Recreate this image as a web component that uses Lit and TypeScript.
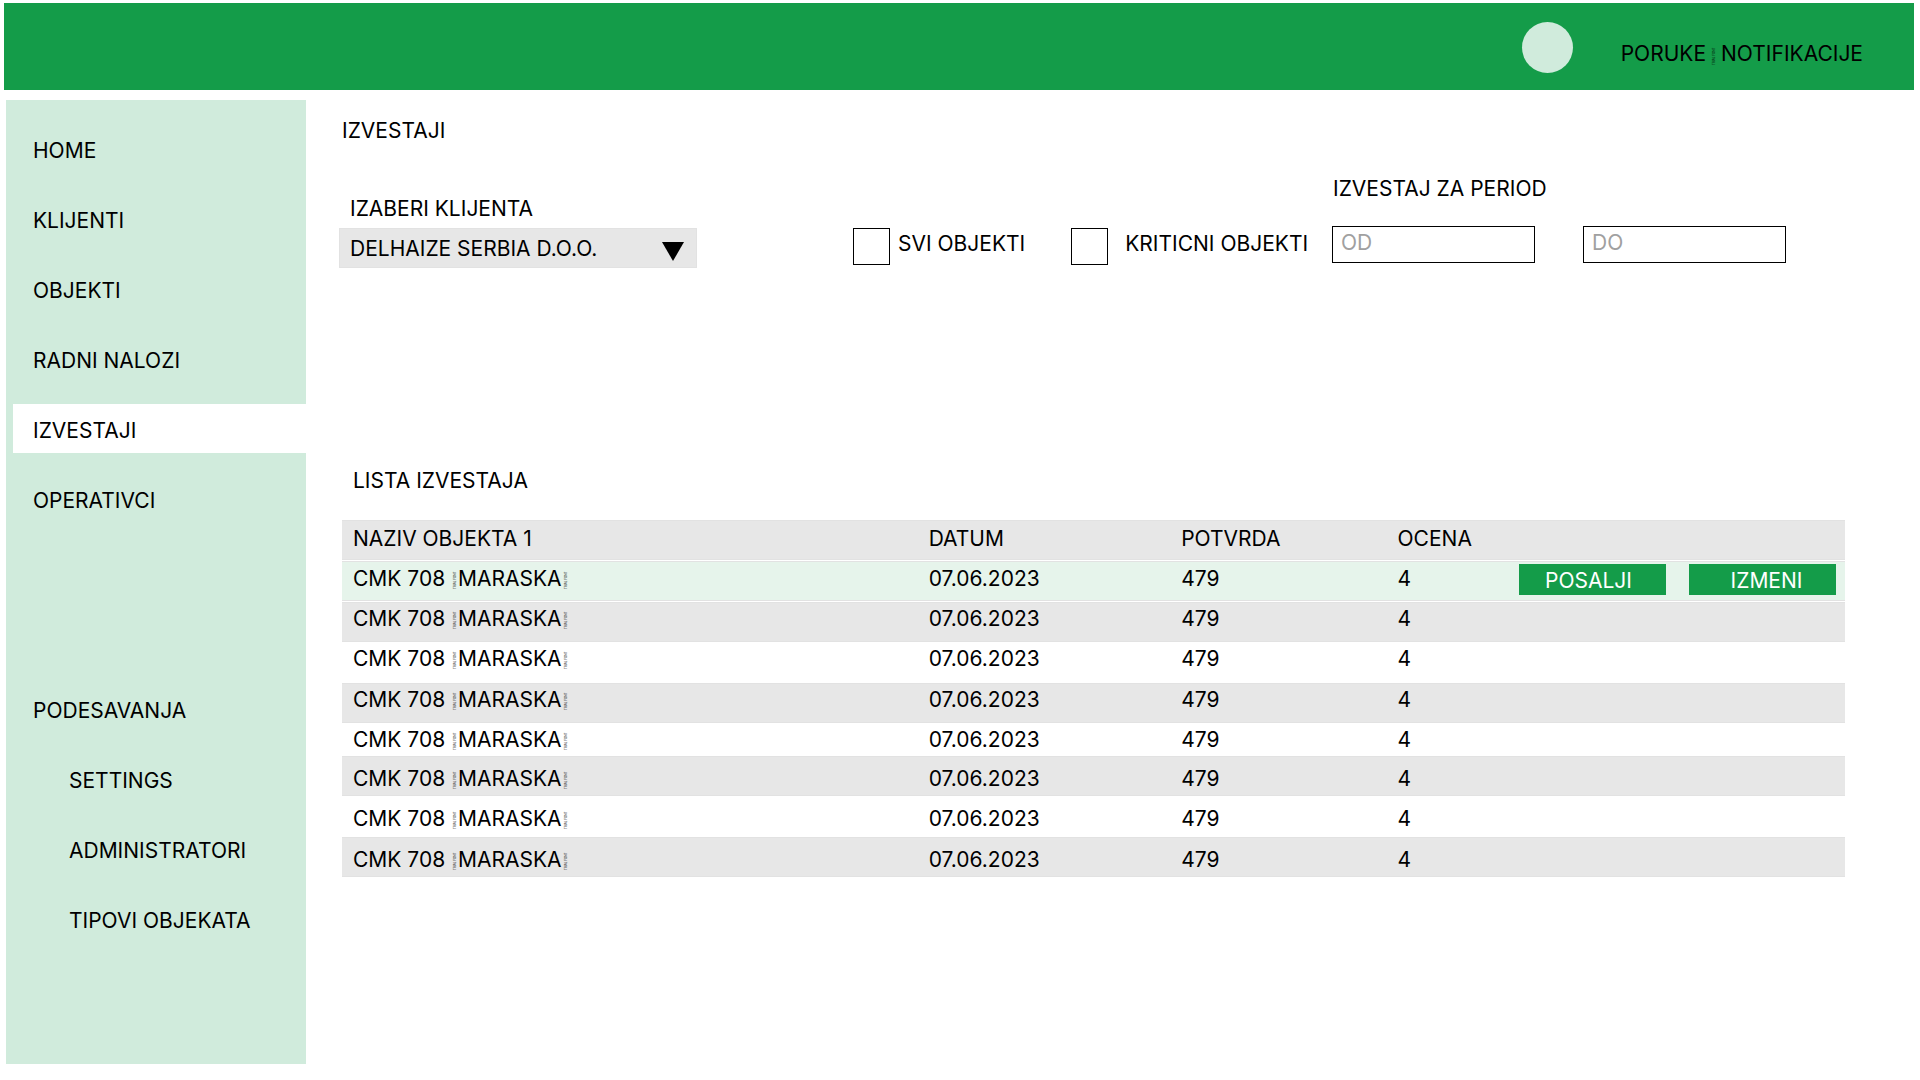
import { LitElement, html, css, nothing } from "lit";
import { customElement } from "lit/decorators.js";
import { classMap } from "lit/directives/class-map.js";

interface Report {
  code: string;
  name: string;
  date: string;
  receipt: string;
  grade: string;
  tone: string;
  actions?: boolean;
}

const report = (tone: string, actions = false): Report => ({
  code: "CMK 708",
  name: "MARASKA",
  date: "07.06.2023",
  receipt: "479",
  grade: "4",
  tone,
  actions,
});

const REPORTS: Report[] = [
  report("selected", true),
  report("shaded"),
  report("plain"),
  report("shaded"),
  report("short"),
  report("shaded low"),
  report("plain low"),
  report("shaded low"),
];

const MAIN_LINKS = ["HOME", "KLIJENTI", "OBJEKTI", "RADNI NALOZI", "IZVESTAJI", "OPERATIVCI"];
const SETTINGS_LINKS = ["SETTINGS", "ADMINISTRATORI", "TIPOVI OBJEKATA"];

@customElement("app-root")
export class AppRoot extends LitElement {
  static styles = css`
    :host {
      display: flex;
      flex-direction: column;
      box-sizing: border-box;
      min-height: 100vh;
      padding: 3px 6px 16px 4px;
      gap: 10px;
      background: #fff;
      color: #000;
      font: 21px/24px Inter, "Noto Sans", sans-serif;
    }
    * {
      box-sizing: border-box;
    }
    a {
      color: inherit;
      text-decoration: none;
    }
    h1,
    h2 {
      margin: 0;
      font-size: 21px;
      font-weight: 400;
    }
    button,
    input,
    select {
      font: inherit;
      color: inherit;
      border-radius: 0;
      margin: 0;
    }
    .bar {
      display: flex;
      align-items: flex-start;
      justify-content: flex-end;
      gap: 48px;
      height: 87px;
      padding: 19px 51px 0 0;
      background: #149c49;
    }
    .avatar {
      width: 51px;
      height: 51px;
      border-radius: 50%;
      background: #d0ebdc;
    }
    .links {
      display: flex;
      align-items: center;
      gap: 4px;
      padding-top: 20px;
    }
    .links .mark {
      margin-top: 4px;
    }
    .mark {
      display: inline-block;
      width: 3px;
      height: 18px;
      margin: 0 2px;
      vertical-align: -3px;
      overflow: visible;
    }
    .mark text {
      font-size: 3px;
    }
    .body {
      display: flex;
      flex: 1;
      padding-left: 2px;
    }
    .side {
      width: 300px;
      flex: none;
      padding: 24px 0 0 7px;
      background: #d0ebdc;
    }
    .menu {
      list-style: none;
      margin: 0;
      padding: 0;
      display: grid;
      gap: 21px;
    }
    .menu + .menu {
      margin-top: 161px;
    }
    .menu a {
      display: flex;
      align-items: center;
      height: 49px;
      padding: 4px 0 0 20px;
    }
    .menu .sub {
      padding-left: 56px;
    }
    .menu .active {
      background: #fff;
    }
    .main {
      flex: 1;
      min-width: 0;
      padding: 19px 69px 0 36px;
    }
    .filters {
      display: flex;
      align-items: flex-start;
      margin: 28px 0 0 -3px;
    }
    .client {
      display: grid;
      width: 358px;
      gap: 7px;
      margin-top: 26px;
    }
    .client label {
      padding-left: 11px;
      height: 24px;
    }
    .pick {
      display: grid;
      align-items: center;
    }
    .pick select {
      appearance: none;
      grid-area: 1 / 1;
      width: 100%;
      height: 40px;
      padding: 2px 40px 0 10px;
      border: 1px solid #e2e2e2;
      background: #e7e7e7;
    }
    .pick svg {
      grid-area: 1 / 1;
      justify-self: end;
      margin: 6px 13px 0 0;
      pointer-events: none;
    }
    .checks {
      display: flex;
      gap: 46px;
      margin: 57px 0 0 156px;
    }
    .check {
      display: flex;
      gap: 8px;
    }
    .check.wide {
      gap: 17px;
    }
    .check span {
      padding-top: 4px;
      white-space: nowrap;
    }
    .check input,
    .period input {
      appearance: none;
      height: 37px;
      border: 1px solid #000;
      background: #fff;
    }
    .check input {
      width: 37px;
    }
    .period {
      display: grid;
      gap: 25px;
      margin: 6px 59px 0 auto;
      padding: 0;
      border: 0;
    }
    .dates {
      display: flex;
      gap: 48px;
    }
    .period input {
      width: 203px;
      padding: 0 8px 4px;
    }
    .period input::placeholder {
      color: #a0a0a0;
      opacity: 1;
    }
    .caption {
      padding-left: 1px;
    }
    .list {
      margin: 201px 0 27px 11px;
    }
    table {
      width: 100%;
      table-layout: fixed;
      border-collapse: separate;
      border-spacing: 0;
    }
    .c-name {
      width: 38.3%;
    }
    .c-date {
      width: 16.8%;
    }
    .c-num {
      width: 14.4%;
    }
    .c-grade {
      width: 7%;
    }
    th,
    td {
      height: 40px;
      padding: 5px 0 0 11px;
      font-weight: 400;
      text-align: left;
      vertical-align: top;
      white-space: nowrap;
      background-clip: padding-box;
    }
    th {
      height: 41px;
      padding-top: 7px;
      border-bottom: 1px solid #fff;
    }
    th,
    .shaded td {
      background-color: #e7e7e7;
      box-shadow: inset 0 1px #e2e2e2, inset 0 -1px #e2e2e2;
    }
    .selected td {
      height: 41px;
      padding-top: 6px;
      border-bottom: 1px solid #fff;
      background-color: #e6f4eb;
      box-shadow: inset 0 1px #e2e2e2, inset 0 -1px #e2e2e2;
    }
    .plain td {
      height: 41px;
    }
    .short td {
      height: 33px;
    }
    .low td {
      padding-top: 11px;
    }
    .actions {
      display: flex;
      justify-content: flex-end;
      gap: 23px;
      margin-top: -3px;
      padding-right: 9px;
    }
    .actions button {
      flex: none;
      width: 147px;
      height: 31px;
      border: 0;
      background: #149c49;
      color: #fff;
    }
    .send {
      padding: 2px 8px 0 0;
    }
    .edit {
      padding: 2px 0 0 8px;
    }
  `;

  /** Tiny upright lettering that the trial typeface puts in place of a bar or bracket. */
  private mark() {
    return html`<svg class="mark" viewBox="0 0 3 18" aria-hidden="true">
      <text x="-18" y="3" transform="rotate(-90)" fill="currentColor">TRIAL FONT</text>
    </svg>`;
  }

  private link(label: string, sub = false) {
    const active = label === "IZVESTAJI";
    return html`<li>
      <a href="#" class=${classMap({ active, sub })} aria-current=${active ? "page" : nothing}>${label}</a>
    </li>`;
  }

  private row(r: Report) {
    return html`<tr class=${r.tone}>
      <td>${r.code} ${this.mark()}${r.name}${this.mark()}</td>
      <td>${r.date}</td>
      <td>${r.receipt}</td>
      <td>${r.grade}</td>
      <td>
        ${r.actions
          ? html`<div class="actions">
              <button class="send" type="button">POSALJI</button>
              <button class="edit" type="button">IZMENI</button>
            </div>`
          : nothing}
      </td>
    </tr>`;
  }

  render() {
    return html`
      <header class="bar">
        <div class="avatar"></div>
        <nav class="links"><a href="#">PORUKE</a>${this.mark()}<a href="#">NOTIFIKACIJE</a></nav>
      </header>
      <div class="body">
        <nav class="side">
          <ul class="menu">
            ${MAIN_LINKS.map((l) => this.link(l))}
          </ul>
          <ul class="menu">
            ${this.link("PODESAVANJA")} ${SETTINGS_LINKS.map((l) => this.link(l, true))}
          </ul>
        </nav>
        <main class="main">
          <h1>IZVESTAJI</h1>
          <form class="filters">
            <div class="client">
              <label for="client">IZABERI KLIJENTA</label>
              <div class="pick">
                <select id="client">
                  <option>DELHAIZE SERBIA D.O.O.</option>
                </select>
                <svg width="22" height="19" viewBox="0 0 22 19" aria-hidden="true"><path d="M0 0H22L11 19Z" /></svg>
              </div>
            </div>
            <div class="checks">
              <label class="check"><input type="checkbox" /><span>SVI OBJEKTI</span></label>
              <label class="check wide"><input type="checkbox" /><span>KRITICNI OBJEKTI</span></label>
            </div>
            <fieldset class="period" aria-labelledby="period">
              <div class="caption" id="period">IZVESTAJ ZA PERIOD</div>
              <div class="dates">
                <input type="text" placeholder="OD" aria-label="OD" />
                <input type="text" placeholder="DO" aria-label="DO" />
              </div>
            </fieldset>
          </form>
          <h2 class="list">LISTA IZVESTAJA</h2>
          <table>
            <colgroup>
              <col class="c-name" />
              <col class="c-date" />
              <col class="c-num" />
              <col class="c-grade" />
              <col />
            </colgroup>
            <thead>
              <tr>
                <th>NAZIV OBJEKTA 1</th>
                <th>DATUM</th>
                <th>POTVRDA</th>
                <th>OCENA</th>
                <th></th>
              </tr>
            </thead>
            <tbody>
              ${REPORTS.map((r) => this.row(r))}
            </tbody>
          </table>
        </main>
      </div>
    `;
  }
}
